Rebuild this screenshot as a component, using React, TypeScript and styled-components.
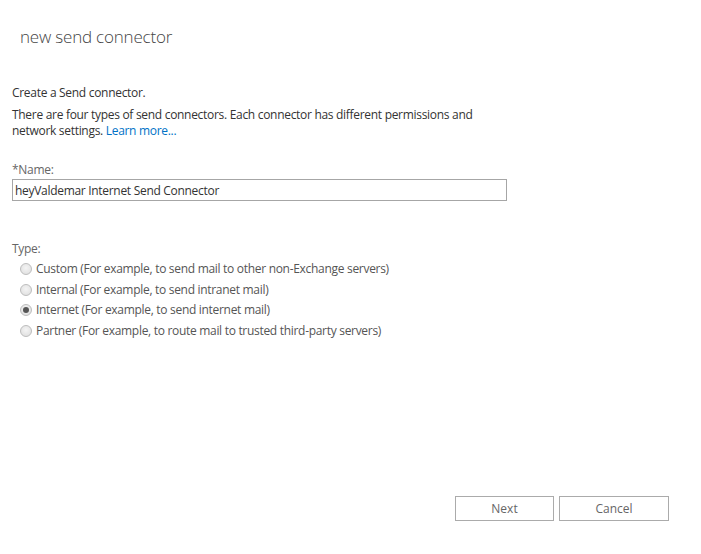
import React from "react";
import styled, { createGlobalStyle } from "styled-components";

const Global = createGlobalStyle`
  html, body { margin: 0; padding: 0; background: #fff; }
  body { font-family: "Open Sans", "Noto Sans", sans-serif; color: #333; }
`;

const Page = styled.div`
  min-height: 554px;
  box-sizing: border-box;
  display: flex;
  flex-direction: column;
  padding: 25px 32px 33px 12px;
`;

const Title = styled.h1`
  margin: 0 0 0 8px;
  font-size: 17px;
  font-weight: 300;
  letter-spacing: -0.2px;
  line-height: 24px;
  color: #444;
`;

const Body = styled.div`
  margin-top: 36px;
  display: flex;
  flex-direction: column;
  font-size: 12px;
  letter-spacing: -0.3px;
  line-height: 16px;
`;

const Para = styled.div<{ $gap?: number }>`
  margin: ${(p) => p.$gap ?? 0}px 0 0 0;
  max-width: 470px;
`;

const Line = styled.div`
  white-space: nowrap;
`;

const Link = styled.a`
  color: #0072c6;
  text-decoration: none;
`;

const Label = styled.label<{ $gap: number }>`
  display: block;
  margin-top: ${(p) => p.$gap}px;
  color: #666;
`;

const TextInput = styled.input`
  margin-top: 1px;
  width: 495px;
  height: 22px;
  box-sizing: border-box;
  border: 1px solid #a6a6a6;
  padding: 0 2px;
  font-family: inherit;
  font-size: 12px;
  letter-spacing: -0.3px;
  color: #333;
  outline: none;
`;

const RadioList = styled.div`
  display: flex;
  flex-direction: column;
  gap: 4.7px;
  margin-top: 4px;
  padding-left: 8px;
`;

const RadioRow = styled.label`
  display: flex;
  align-items: center;
  gap: 4px;
  color: #555;
`;

const RadioDot = styled.span<{ $checked?: boolean }>`
  width: 12px;
  height: 12px;
  box-sizing: border-box;
  border-radius: 50%;
  border: 1px solid #bdbdbd;
  background: radial-gradient(circle at 50% 40%, #f4f4f4 0%, #dcdcdc 100%);
  display: flex;
  align-items: center;
  justify-content: center;
  &::after {
    content: "";
    display: ${(p) => (p.$checked ? "block" : "none")};
    width: 6px;
    height: 6px;
    border-radius: 50%;
    background: #555;
  }
`;

const Footer = styled.div`
  margin-top: auto;
  display: flex;
  justify-content: flex-end;
  gap: 5px;
`;

const Button = styled.button<{ $w: number }>`
  width: ${(p) => p.$w}px;
  height: 25px;
  box-sizing: border-box;
  border: 1px solid #ababab;
  background: #fff;
  font-family: inherit;
  font-size: 12px;
  color: #666;
  padding: 0;
`;

const options = [
  { label: "Custom (For example, to send mail to other non-Exchange servers)" },
  { label: "Internal (For example, to send intranet mail)" },
  { label: "Internet (For example, to send internet mail)", checked: true },
  { label: "Partner (For example, to route mail to trusted third-party servers)" },
];

export default function App() {
  return (
    <>
      <Global />
      <Page>
        <Title>new send connector</Title>
        <Body>
          <Para>Create a Send connector.</Para>
          <Para $gap={6}>
            <Line>There are four types of send connectors. Each connector has different permissions and</Line>
            <Line>
              network settings. <Link href="#">Learn more...</Link>
            </Line>
          </Para>
          <Label $gap={23}>*Name:</Label>
          <TextInput defaultValue="heyValdemar Internet Send Connector" />
          <Label $gap={40}>Type:</Label>
          <RadioList>
            {options.map((o) => (
              <RadioRow key={o.label}>
                <RadioDot $checked={o.checked} />
                {o.label}
              </RadioRow>
            ))}
          </RadioList>
        </Body>
        <Footer>
          <Button $w={99}>Next</Button>
          <Button $w={110}>Cancel</Button>
        </Footer>
      </Page>
    </>
  );
}
